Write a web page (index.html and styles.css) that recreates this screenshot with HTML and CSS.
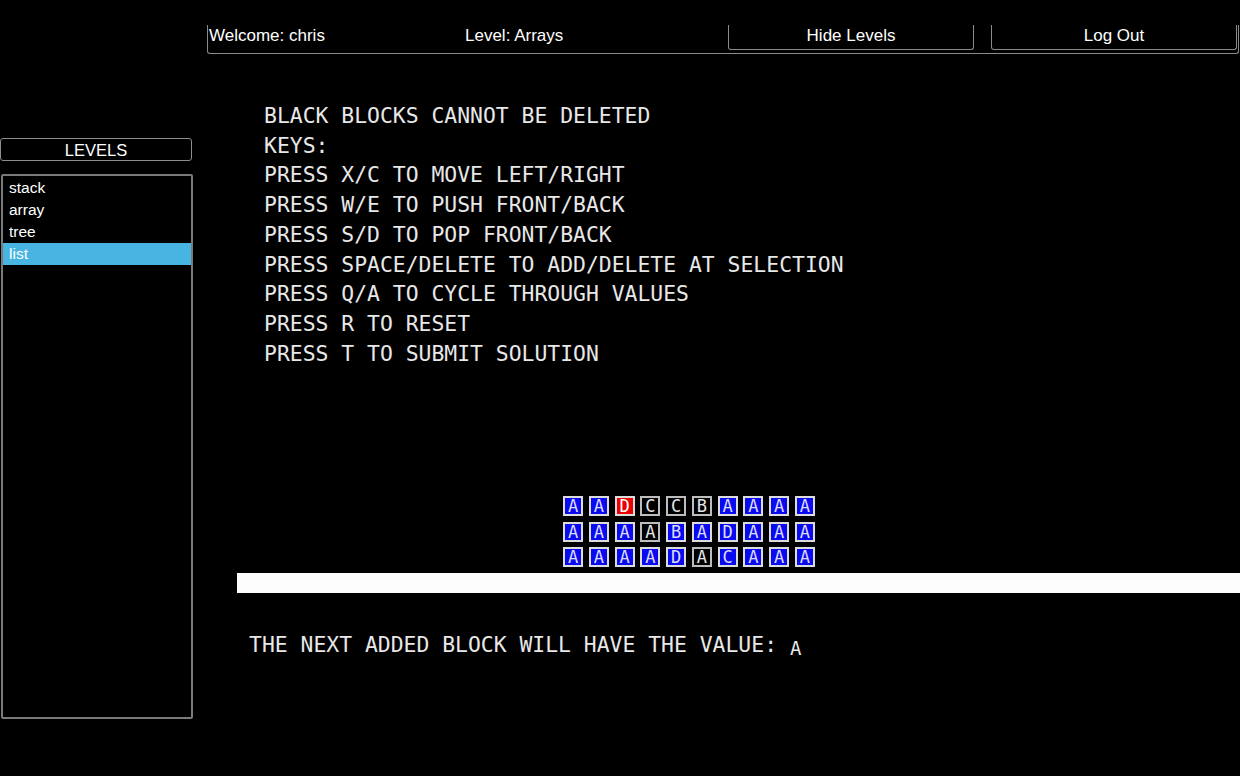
FILE: index.html
```html
<!DOCTYPE html>
<html>
<head>
<meta charset="utf-8">
<title>Arrays</title>
<link rel="stylesheet" href="styles.css">
</head>
<body>
<div class="page">
  <aside class="sidebar">
    <div class="levels-title">LEVELS</div>
    <ul class="level-list">
      <li class="level-item">stack</li>
      <li class="level-item">array</li>
      <li class="level-item">tree</li>
      <li class="level-item selected">list</li>
    </ul>
  </aside>
  <main class="main">
    <header class="topbar">
      <div class="welcome">Welcome: chris</div>
      <div class="level-name">Level: Arrays</div>
      <button class="top-btn hide-btn">Hide Levels</button>
      <button class="top-btn logout-btn">Log Out</button>
    </header>
    <div class="instructions">
      <div class="line">BLACK BLOCKS CANNOT BE DELETED</div>
      <div class="line">KEYS:</div>
      <div class="line">PRESS X/C TO MOVE LEFT/RIGHT</div>
      <div class="line">PRESS W/E TO PUSH FRONT/BACK</div>
      <div class="line">PRESS S/D TO POP FRONT/BACK</div>
      <div class="line">PRESS SPACE/DELETE TO ADD/DELETE AT SELECTION</div>
      <div class="line">PRESS Q/A TO CYCLE THROUGH VALUES</div>
      <div class="line">PRESS R TO RESET</div>
      <div class="line">PRESS T TO SUBMIT SOLUTION</div>
    </div>
    <div class="board">
      <span class="blk blue">A</span><span class="blk blue">A</span><span class="blk red">D</span><span class="blk black">C</span><span class="blk black">C</span><span class="blk black">B</span><span class="blk blue">A</span><span class="blk blue">A</span><span class="blk blue">A</span><span class="blk blue">A</span>
      <span class="blk blue">A</span><span class="blk blue">A</span><span class="blk blue">A</span><span class="blk black">A</span><span class="blk blue">B</span><span class="blk blue">A</span><span class="blk blue">D</span><span class="blk blue">A</span><span class="blk blue">A</span><span class="blk blue">A</span>
      <span class="blk blue">A</span><span class="blk blue">A</span><span class="blk blue">A</span><span class="blk blue">A</span><span class="blk blue">D</span><span class="blk black">A</span><span class="blk blue">C</span><span class="blk blue">A</span><span class="blk blue">A</span><span class="blk blue">A</span>
    </div>
    <div class="floor"></div>
    <div class="next-value">THE NEXT ADDED BLOCK WILL HAVE THE VALUE: <span class="next-letter">A</span></div>
  </main>
</div>
</body>
</html>
```

FILE: styles.css
```css
html, body {
  margin: 0;
  padding: 0;
  background: #000;
  color: #fff;
  height: 100%;
  overflow: hidden;
}

.page {
  display: flex;
  align-items: flex-start;
  min-height: 776px;
}

.sidebar {
  width: 193px;
  flex: none;
  margin-top: 138px;
  font-family: "Liberation Sans", Arial, sans-serif;
}

.levels-title {
  height: 21px;
  border: 1px solid #8c8c8c;
  border-radius: 3px;
  text-align: center;
  font-size: 16.5px;
  line-height: 23px;
  color: #fff;
  box-sizing: content-box;
  width: 190px;
}

.level-list {
  list-style: none;
  margin: 13px 0 0 1px;
  padding: 1px 0 0 0;
  width: 188px;
  height: 540px;
  border: 2px solid #7a7a7a;
  border-radius: 2px;
  box-sizing: content-box;
}

.level-item {
  height: 22px;
  line-height: 21px;
  padding-left: 6px;
  font-size: 15.5px;
  color: #fff;
}

.level-item.selected {
  background: #48b4e2;
}

.main {
  flex: 1;
  padding-top: 25px;
  padding-left: 14px;
  min-width: 0;
}

.topbar {
  display: flex;
  align-items: flex-start;
  height: 28px;
  margin-right: 1px;
  border: 1px solid #8a8a8a;
  border-top: none;
  border-radius: 0 0 3px 3px;
  font-family: "Liberation Sans", Arial, sans-serif;
  font-size: 17px;
}

.welcome {
  width: 256px;
  padding-left: 1px;
  line-height: 21px;
}

.level-name {
  width: 263px;
  line-height: 21px;
}

.top-btn {
  width: 246px;
  height: 25px;
  margin: 0;
  padding: 0 0 3px 0;
  background: #000;
  color: #fff;
  border: 1px solid #8a8a8a;
  border-top: none;
  border-radius: 0 0 3px 3px;
  font-family: "Liberation Sans", Arial, sans-serif;
  font-size: 17px;
  line-height: 21px;
}

.logout-btn {
  margin-left: 17px;
}

.instructions {
  margin-top: 47px;
  padding-left: 57px;
  font-family: "DejaVu Sans Mono", monospace;
  font-size: 21.4px;
  line-height: 29.7px;
  color: #e8e8e8;
}

.line {
  white-space: nowrap;
}

.board {
  display: grid;
  grid-template-columns: repeat(10, 20px);
  column-gap: 5.75px;
  row-gap: 5.5px;
  margin-top: 128px;
  margin-left: 356px;
  width: max-content;
}

.blk {
  width: 20px;
  height: 20px;
  box-sizing: border-box;
  border: 2px solid #d8d8d8;
  font-family: "DejaVu Sans Mono", monospace;
  font-size: 17px;
  line-height: 16px;
  text-align: center;
  color: #dcdcff;
}

.blk.blue {
  background: #0a0af0;
  border-color: #dcdcdc;
}

.blk.red {
  background: #ec0000;
  color: #fff;
  border-color: #dcdcdc;
}

.blk.black {
  background: #000;
  color: #e6e6e6;
  border-color: #bdbdbd;
}

.floor {
  height: 20px;
  margin-top: 6px;
  margin-left: 30px;
  background: #fdfdfd;
}

.next-value {
  margin-top: 37px;
  padding-left: 42px;
  font-family: "DejaVu Sans Mono", monospace;
  font-size: 21.4px;
  line-height: 29.7px;
  color: #e8e8e8;
  white-space: nowrap;
}

.next-letter {
  font-size: 19px;
  position: relative;
  top: 3px;
}
```
